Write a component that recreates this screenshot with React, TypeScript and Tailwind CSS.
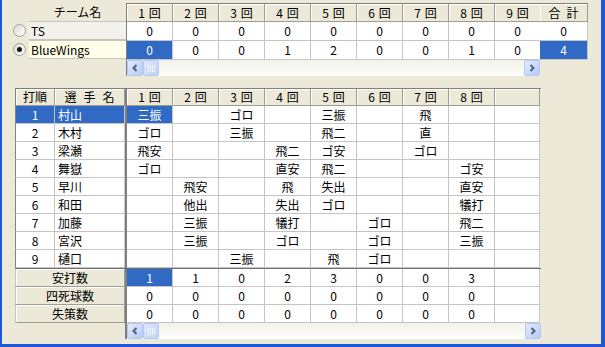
import React from "react";

const HEAD =
  "flex shrink-0 items-center justify-center bg-[#ECE9D8] border-r border-b border-[#9f9d91] shadow-[inset_1px_1px_0_#ffffff]";
const CELL = "flex shrink-0 items-center justify-center border-r border-b border-[#c4c4c4]";
const SEL = "bg-[#316AC5] text-white";

const innings = ["1", "2", "3", "4", "5", "6", "7", "8", "9"];

const teams = [
  { name: "TS", scores: ["0", "0", "0", "0", "0", "0", "0", "0", "0"], total: "0", checked: false },
  { name: "BlueWings", scores: ["0", "0", "0", "1", "2", "0", "0", "1", "0"], total: "4", checked: true },
];

const players: [string, string, Record<number, string>][] = [
  ["1", "村山", { 0: "三振", 2: "ゴロ", 4: "三振", 6: "飛" }],
  ["2", "木村", { 0: "ゴロ", 2: "三振", 4: "飛二", 6: "直" }],
  ["3", "梁瀬", { 0: "飛安", 3: "飛二", 4: "ゴ安", 6: "ゴロ" }],
  ["4", "舞嶽", { 0: "ゴロ", 3: "直安", 4: "飛二", 7: "ゴ安" }],
  ["5", "早川", { 1: "飛安", 3: "飛", 4: "失出", 7: "直安" }],
  ["6", "和田", { 1: "他出", 3: "失出", 4: "ゴロ", 7: "犠打" }],
  ["7", "加藤", { 1: "三振", 3: "犠打", 5: "ゴロ", 7: "飛二" }],
  ["8", "宮沢", { 1: "三振", 3: "ゴロ", 5: "ゴロ", 7: "三振" }],
  ["9", "樋口", { 2: "三振", 4: "飛", 5: "ゴロ" }],
];

const summary: [string, string[]][] = [
  ["安打数", ["1", "1", "0", "2", "3", "0", "0", "3", ""]],
  ["四死球数", ["0", "0", "0", "0", "0", "0", "0", "0", ""]],
  ["失策数", ["0", "0", "0", "0", "0", "0", "0", "0", ""]],
];

function Inning({ n }: { n: string }) {
  return (
    <span className="flex items-center gap-[4px]">
      <span>{n}</span>
      <span>回</span>
    </span>
  );
}

function Arrow({ dir }: { dir: "left" | "right" }) {
  return (
    <div className="flex h-[16px] w-[16px] shrink-0 items-center justify-center rounded-[2px] border border-[#b4c8f4] bg-gradient-to-br from-[#e3ebfd] to-[#b8cbf6]">
      <svg width="8" height="8" viewBox="0 0 8 8">
        {dir === "left" ? (
          <polyline points="5.5,1 2.5,4 5.5,7" fill="none" stroke="#4d6185" strokeWidth="2" />
        ) : (
          <polyline points="2.5,1 5.5,4 2.5,7" fill="none" stroke="#4d6185" strokeWidth="2" />
        )}
      </svg>
    </div>
  );
}

function ScrollBar() {
  return (
    <div className="flex h-[16px] items-stretch bg-gradient-to-b from-[#f3f1ea] to-[#fefefb]">
      <Arrow dir="left" />
      <div className="flex h-[16px] w-[16px] shrink-0 items-center justify-center gap-[1px] rounded-[2px] border border-[#b4c8f4] bg-gradient-to-br from-[#dfe8fd] to-[#c0d1f7]">
        <span className="h-[7px] w-[1px] bg-[#eef3fe]" />
        <span className="h-[7px] w-[1px] bg-[#eef3fe]" />
        <span className="h-[7px] w-[1px] bg-[#eef3fe]" />
        <span className="h-[7px] w-[1px] bg-[#eef3fe]" />
      </div>
      <div className="flex-1" />
      <Arrow dir="right" />
    </div>
  );
}

function Radio({ checked }: { checked: boolean }) {
  return (
    <span className="flex h-[13px] w-[13px] items-center justify-center rounded-full border border-[#a5a397] bg-gradient-to-br from-[#dcdbd4] to-white">
      {checked && <span className="h-[5px] w-[5px] rounded-full bg-[#111]" />}
    </span>
  );
}

export default function App() {
  return (
    <div className="flex h-[347px] w-[605px] flex-col border-b-[3px] border-l-2 border-r-4 border-[#1d56d8] bg-[#ECE9D8] font-['Noto_Sans_CJK_JP',sans-serif] text-[12px] leading-none text-black">
      {/* チーム別 得点 */}
      <div className="flex pt-[3px]">
        <div className="flex w-[124px] flex-col">
          <div className="flex h-[18px] items-center pl-[27px]">
            <span className="flex-1 text-center">チーム名</span>
          </div>
          {teams.map((t) => (
            <div key={t.name} className="flex h-[19px] items-center">
              <div className="flex w-[27px] items-center pl-[11px]">
                <Radio checked={t.checked} />
              </div>
              <div
                className={
                  "flex h-full w-[97px] items-center border-b border-t border-[#c8c6bc] pl-[2px] " +
                  (t.checked ? "bg-[#fffde8]" : "bg-[#f2f1ec]")
                }
              >
                {t.name}
              </div>
            </div>
          ))}
        </div>

        <div className="flex w-[414px] flex-col border-l border-t border-[#7f7f7f]">
          <div className="flex h-[18px]">
            {innings.map((h) => (
              <div key={h} className={HEAD + " w-[46px]"}>
                <Inning n={h} />
              </div>
            ))}
          </div>
          {teams.map((t, r) => (
            <div key={t.name} className="flex h-[19px]">
              {t.scores.map((s, i) => (
                <div key={i} className={CELL + " w-[46px] " + (r === 1 && i === 0 ? SEL : "bg-white")}>
                  {s}
                </div>
              ))}
            </div>
          ))}
          <ScrollBar />
        </div>

        <div className="flex w-[48px] flex-col border-t border-[#7f7f7f]">
          <div className={HEAD + " h-[18px] gap-[6px]"}>
            <span>合</span>
            <span>計</span>
          </div>
          {teams.map((t, r) => (
            <div key={t.name} className={CELL + " h-[19px] " + (r === 1 ? SEL : "bg-white")}>
              {t.total}
            </div>
          ))}
        </div>
      </div>

      {/* 打撃成績 */}
      <div className="ml-[13px] mt-[12px] flex w-[526px] flex-col">
        <div className="flex h-[18px] border-t border-[#7f7f7f]">
          <div className={HEAD + " w-[40px] border-l border-l-[#7f7f7f]"}>打順</div>
          <div className={HEAD + " w-[70px] gap-[7px]"}>
            <span>選</span>
            <span>手</span>
            <span>名</span>
          </div>
          <div className="w-[2px] bg-[#7f7f7f]" />
          {innings.map((h, i) => (
            <div key={h} className={HEAD + (i === 8 ? " w-[45px]" : " w-[46px]")}>
              {i === 8 ? "" : <Inning n={h} />}
            </div>
          ))}
        </div>

        {players.map(([no, name, res], r) => (
          <div key={no} className="flex h-[18px]">
            <div className={CELL + " w-[40px] border-l border-l-[#7f7f7f] " + (r === 0 ? SEL : "bg-white")}>{no}</div>
            <div className={CELL + " w-[70px] justify-start pl-[3px] " + (r === 0 ? SEL : "bg-white")}>{name}</div>
            <div className="w-[2px] bg-[#7f7f7f]" />
            {innings.map((h, i) => (
              <div
                key={h}
                className={CELL + (i === 8 ? " w-[45px] " : " w-[46px] ") + (r === 0 && i === 0 ? SEL : "bg-white")}
              >
                {res[i] ?? ""}
              </div>
            ))}
          </div>
        ))}

        <div className="h-[1px] w-full bg-[#6f6f6f]" />

        {summary.map(([label, vals], r) => (
          <div key={label} className="flex h-[18px]">
            <div className={HEAD + " w-[110px] border-l border-l-[#c8c6bc]"}>{label}</div>
            <div className="w-[2px] bg-[#7f7f7f]" />
            {vals.map((v, i) => (
              <div
                key={i}
                className={CELL + (i === 8 ? " w-[45px] " : " w-[46px] ") + (r === 0 && i === 0 ? SEL : "bg-white")}
              >
                {v}
              </div>
            ))}
          </div>
        ))}

        <div className="flex">
          <div className="w-[110px]" />
          <div className="w-[2px] bg-[#7f7f7f]" />
          <div className="flex-1">
            <ScrollBar />
          </div>
        </div>
      </div>
    </div>
  );
}
